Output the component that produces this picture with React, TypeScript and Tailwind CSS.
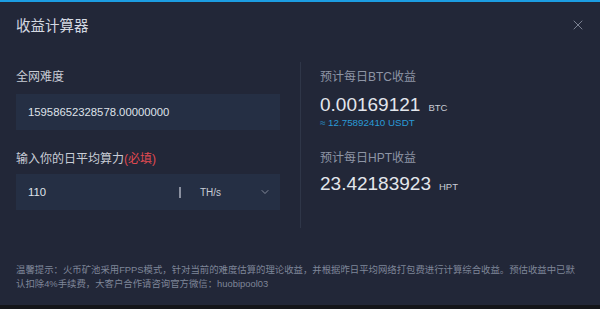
import { X, ChevronDown } from 'lucide-react'

const FONT = { fontFamily: '"Liberation Sans", "Noto Sans CJK SC", sans-serif' }

export default function App() {
  return (
    <div className="w-[600px] h-[309px] bg-[#141519] flex flex-col" style={FONT}>
      <div className="h-[305px] bg-[#222738] border-t-2 border-[#1c9de2] flex flex-col">
        <div className="h-[48px] pl-4 pr-[14px] flex items-center justify-between">
          <h1 className="text-[14.5px] text-[#d4d8e1] leading-none">收益计算器</h1>
          <X className="w-[16px] h-[16px] text-[#8a90a0] mb-[3px]" strokeWidth={1.3} />
        </div>

        <div className="flex">
          <div className="w-[300px] pl-4 pr-[20px] pt-[19px]">
            <p className="text-[12px] leading-[16px] text-[#c9cdd6]">全网难度</p>
            <div className="mt-[9px] h-[36px] bg-[#252f44] flex items-center px-3">
              <span className="text-[11.3px] text-[#dfe2e9]">15958652328578.00000000</span>
            </div>
            <p className="mt-[21px] text-[12px] leading-[16px] text-[#c9cdd6]">
              输入你的日平均算力<span className="text-[#e04a51]">(必填)</span>
            </p>
            <div className="mt-[7px] h-[36px] bg-[#252f44] flex items-center pl-3 pr-[9px]">
              <span className="text-[11.3px] text-[#dfe2e9] w-[151px]">110</span>
              <span className="w-[2px] h-[11px] bg-[#8a90a0]" />
              <span className="ml-[19px] text-[10px] text-[#c9cdd6] flex-1">TH/s</span>
              <ChevronDown className="w-[12px] h-[12px] text-[#9aa0ae]" strokeWidth={1.6} />
            </div>
          </div>

          <div className="w-px h-[166px] mt-[12px] bg-[#2f3648]" />

          <div className="pl-[19px] pt-[19px]">
            <p className="text-[12px] leading-[16px] text-[#8e95a5]">预计每日BTC收益</p>
            <div className="mt-[9px] flex items-baseline gap-[8px]">
              <span className="text-[19px] leading-[22px] text-[#e3e6ec]">0.00169121</span>
              <span className="text-[9.5px] text-[#c9cdd6]">BTC</span>
            </div>
            <p className="mt-[1px] text-[9.8px] leading-[12px] text-[#2a9ad6]">≈ 12.75892410 USDT</p>
            <p className="mt-[21px] text-[12px] leading-[16px] text-[#8e95a5]">预计每日HPT收益</p>
            <div className="mt-[7px] flex items-baseline gap-[8px]">
              <span className="text-[19px] leading-[22px] text-[#e3e6ec]">23.42183923</span>
              <span className="text-[9.5px] text-[#c9cdd6]">HPT</span>
            </div>
          </div>
        </div>

        <div className="mt-auto pl-4 pr-2 pb-[14px] text-[9.4px] leading-[14px] text-[#7f8698]">
          <p className="whitespace-nowrap">
            温馨提示：火币矿池采用FPPS模式，针对当前的难度估算的理论收益，并根据昨日平均网络打包费进行计算综合收益。预估收益中已默
          </p>
          <p className="whitespace-nowrap">认扣除4%手续费，大客户合作请咨询官方微信：huobipool03</p>
        </div>
      </div>
    </div>
  )
}
